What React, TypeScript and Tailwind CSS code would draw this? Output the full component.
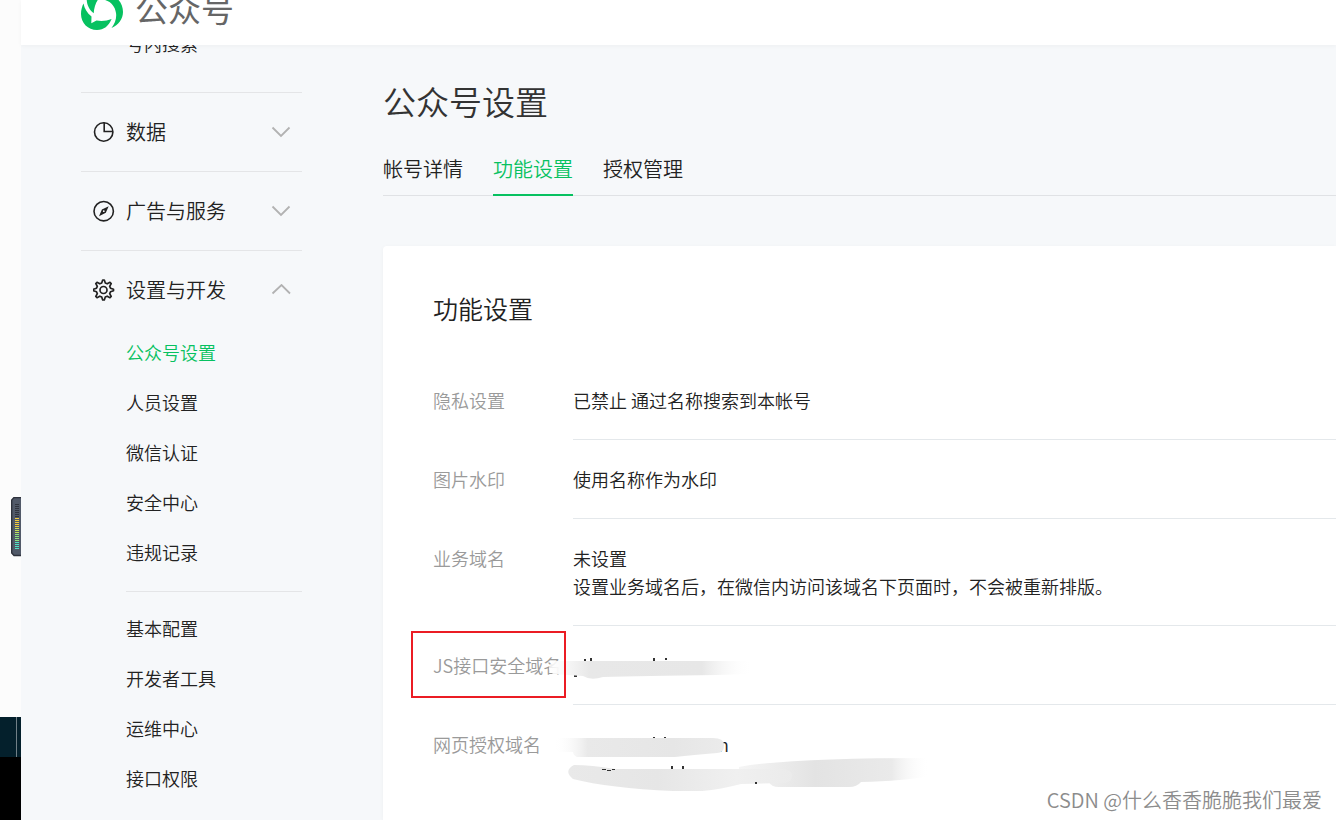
import { useState } from 'react';

const ACCOUNT_LINKS = ['公众号设置', '人员设置', '微信认证', '安全中心', '违规记录'];
const DEV_LINKS = ['基本配置', '开发者工具', '运维中心', '接口权限'];
const TABS = ['帐号详情', '功能设置', '授权管理'];

function Logo() {
  return (
    <svg viewBox="0 0 42 42" className="h-[42px] w-[42px] shrink-0" fill="#07c160" aria-hidden="true">
      <path d="M2.500 15.500C3.500 20.500 6 25 10.500 28.500L10.300 35.200L15.500 32.600C21 33.400 26 32.900 30.600 31C27.500 38 23 42 16 42C7 42 0 35 0 26C0 22 1 18.500 2.500 15.500Z" />
      <path d="M18 .3C22 .3 25 1 28 2.500C19 6.500 13.500 14 12.700 25.300C8.500 22 5.700 17 5.700 11C6 7 10 1 18 .3Z" />
      <path d="M29 6.500C37 9 42 16 42 24C42 31 37.500 37 30.500 40C34 35.500 35.800 30.500 35 25C34.200 19 30.500 13.500 23 11.700C24 9.500 26 7.500 29 6.500Z" />
    </svg>
  );
}

function PieIcon() {
  return (
    <svg viewBox="0 0 22 22" className="h-[22px] w-[22px]" fill="none" stroke="#222" strokeWidth="1.6" aria-hidden="true">
      <circle cx="10.700" cy="11" r="9.200" />
      <path d="M11.200 1.500V10.500H20" />
    </svg>
  );
}

function CompassIcon() {
  return (
    <svg viewBox="0 0 22 22" className="h-[22px] w-[22px]" fill="none" aria-hidden="true">
      <circle cx="10.700" cy="11.200" r="9.700" stroke="#222" strokeWidth="1.6" />
      <path fill="#222" fillRule="evenodd" d="M15.700 6.200L12.800 12.800L6 16.200L8.900 9.500ZM10.800 10.300A.9.9 0 1 0 10.800 12.100A.9.9 0 1 0 10.800 10.300Z" />
    </svg>
  );
}

function GearIcon() {
  return (
    <svg viewBox="0 0 22 22" className="h-[22px] w-[22px]" fill="none" stroke="#222" strokeWidth="1.7" strokeLinejoin="round" aria-hidden="true">
      <path d="M9.700 1H11.300L12.300 4L14.200 4.800L17 3.300L18.200 4.500L16.700 7.300L17.500 9.200L20.500 10.200V11.800L17.500 12.800L16.700 14.700L18.200 17.500L17 18.700L14.200 17.200L12.300 18L11.300 21H9.700L8.700 18L6.800 17.200L4 18.700L2.800 17.500L4.300 14.700L3.500 12.800L.5 11.800V10.200L3.500 9.200L4.300 7.300L2.800 4.500L4 3.300L6.800 4.800L8.700 4Z" />
      <circle cx="10.500" cy="11" r="3.500" />
    </svg>
  );
}

function Chevron({ up = false }: { up?: boolean }) {
  return (
    <svg viewBox="0 0 20 12" className="ml-auto h-3 w-5" fill="none" stroke="#b2b2b2" strokeWidth="1.8" aria-hidden="true">
      <path d={up ? 'M1.500 9.500L10.500 1L19 9.500' : 'M1.500 1.500L10 10L18.500 1.500'} />
    </svg>
  );
}

function SectionButton({ icon, label, open = false }: { icon: React.ReactNode; label: string; open?: boolean }) {
  return (
    <button type="button" aria-expanded={open} className="flex h-[78px] w-full items-center pr-[11px] pl-3 text-xl">
      {icon}
      <span className="ml-[11px]">{label}</span>
      <Chevron up={open} />
    </button>
  );
}

function NavList({ items, active }: { items: string[]; active?: string }) {
  return (
    <ul>
      {items.map((item) => (
        <li key={item}>
          <a href="#" className={`flex h-[50px] items-center ${item === active ? 'text-[#07c160]' : ''}`}>
            {item}
          </a>
        </li>
      ))}
    </ul>
  );
}

function DesktopStrip() {
  return (
    <div className="relative flex w-[21px] shrink-0 flex-col bg-[#fcfcfc]" aria-hidden="true">
      <div className="flex-1" />
      <div className="h-10 border-r-4 border-[#04202c] bg-[#04202c]">
        <div className="h-full border-r border-[#718087]" />
      </div>
      <div className="h-[63px] bg-black" />
      {/* level meter docked at the window edge */}
      <svg viewBox="0 0 10 60" className="absolute top-[497px] right-0 h-[60px] w-[10px]">
        <path d="M10 .5H3L.7 3V56L3 58.500H10" fill="#515968" stroke="#2e323c" strokeWidth="1.4" />
        <path d="M6 7V21" stroke="#30343e" strokeWidth="4" strokeDasharray="1 1" />
        <path d="M6 21V31" stroke="#f2cc3d" strokeWidth="4" strokeDasharray="1 1" />
        <path d="M6 31V37" stroke="#c5e05a" strokeWidth="4" strokeDasharray="1 1" />
        <path d="M6 37V45" stroke="#8fe37e" strokeWidth="4" strokeDasharray="1 1" />
        <path d="M6 45V53" stroke="#4fe3c4" strokeWidth="4" strokeDasharray="1 1" />
      </svg>
    </div>
  );
}

function Row({ label, last = false, children }: { label: string; last?: boolean; children: React.ReactNode }) {
  return (
    <div className="flex leading-7">
      <dt className="w-[140px] shrink-0 py-[25px] whitespace-nowrap text-[#9a9a9a]">{label}</dt>
      <dd className={`relative min-w-0 flex-1 py-[25px] ${last ? '' : 'border-b border-[#e4e8eb]'}`}>{children}</dd>
    </div>
  );
}

function JsSmudge() {
  return (
    <svg viewBox="0 0 220 40" className="absolute top-5 -left-8 h-10 w-[220px]" aria-hidden="true">
      <defs>
        <linearGradient id="js-smudge">
          <stop offset="0" stopColor="#fff" stopOpacity=".8" />
          <stop offset=".06" stopColor="#fafafa" />
          <stop offset=".2" stopColor="#e8e8e8" />
          <stop offset=".75" stopColor="#e7e7e7" />
          <stop offset="1" stopColor="#fff" stopOpacity="0" />
        </linearGradient>
      </defs>
      <path fill="#333" d="M43 13h2v3h-2zM49 12h2v4h-2zM112 12h2v4h-2zM124 12h2v2h-2zM33 29h3v2h-3z" />
      <path fill="url(#js-smudge)" d="M12 15H205Q212 15 212 22Q212 28 206 28L176 29Q100 30 62 31Q50 35 42 30L12 28Q4 22 12 15Z" />
    </svg>
  );
}

function OauthSmudge() {
  return (
    <svg viewBox="0 0 400 70" className="absolute top-4 -left-6 h-[70px] w-[400px]" aria-hidden="true">
      <defs>
        <linearGradient id="oauth-a">
          <stop offset="0" stopColor="#fff" stopOpacity="0" />
          <stop offset=".2" stopColor="#e9e9e9" />
          <stop offset=".7" stopColor="#e6e6e6" />
          <stop offset="1" stopColor="#ebebeb" />
        </linearGradient>
        <linearGradient id="oauth-b">
          <stop offset="0" stopColor="#e9e9e9" />
          <stop offset=".4" stopColor="#e6e6e6" />
          <stop offset=".75" stopColor="#f0f0f0" />
          <stop offset="1" stopColor="#ebebeb" />
        </linearGradient>
        <linearGradient id="oauth-c">
          <stop offset="0" stopColor="#f5f5f5" />
          <stop offset=".4" stopColor="#e3e3e3" />
          <stop offset=".8" stopColor="#eaeaea" />
          <stop offset="1" stopColor="#fff" stopOpacity="0" />
        </linearGradient>
      </defs>
      <path fill="url(#oauth-a)" d="M9 17H164Q175 17 175 24Q175 32 168 32Q144 34 126 36L28 36Q24 34 24 31H9Q0 24 9 17Z" />
      <path fill="url(#oauth-c)" d="M190 46Q240 37 381 37L381 55Q354 60 312 61Q308 66 300 66H230Q222 66 220 61L190 58Z" />
      <path fill="url(#oauth-b)" d="M25 44Q42 44 66 48L232 48Q243 48 243 55Q243 62 234 62L192 63Q154 73 124 70Q60 67 24 58Q14 50 25 44Z" />
      <path fill="#333" d="M104 16h2v1h-2zM115 16h2v1h-2zM53 48h4v1h-4zM58 49h4v1h-4zM63 48h3v1h-3zM122 45h2v3h-2zM133 45h2v3h-2zM206 61h2v2h-2z" />
    </svg>
  );
}

export default function App() {
  const [tab, setTab] = useState('功能设置');

  return (
    <div className="flex min-h-screen overflow-hidden bg-[#f6f8fa] font-['Noto_Sans_CJK_SC',sans-serif] text-[18px] font-[350] text-[#222]">
      <DesktopStrip />
      <div className="flex min-w-0 flex-1 flex-col">
        <header className="relative z-10 flex h-[45px] items-end overflow-hidden bg-white pb-[15px] pl-[60px] shadow-[0_1px_4px_rgba(0,0,0,0.04)]">
          <Logo />
          <span className="ml-3 text-[33px] leading-11 font-normal text-[#666]">公众号</span>
        </header>

        <div className="flex flex-1">
          <nav className="ml-[60px] w-[221px] shrink-0">
            <a href="#" className="-mt-[27px] mb-6 ml-[45px] flex h-[50px] items-center">号内搜索</a>
            <div className="border-t border-[#e4e5e7]">
              <SectionButton icon={<PieIcon />} label="数据" />
            </div>
            <div className="border-t border-[#e4e5e7]">
              <SectionButton icon={<CompassIcon />} label="广告与服务" />
            </div>
            <div className="border-t border-[#e4e5e7]">
              <SectionButton icon={<GearIcon />} label="设置与开发" open />
              <div className="-mt-0.5 ml-[45px]">
                <NavList items={ACCOUNT_LINKS} active="公众号设置" />
                <div className="mt-3.5 border-t border-[#e4e5e7] pt-[11px]">
                  <NavList items={DEV_LINKS} />
                </div>
              </div>
            </div>
          </nav>

          <main className="ml-[81px] flex min-w-0 flex-1 flex-col pt-[34px]">
            <h1 className="text-[33px] leading-11 text-[#333]">公众号设置</h1>
            <div role="tablist" className="mt-5 mb-[50px] flex h-[53px] gap-[30px] border-b border-[#e0e2e5] text-xl">
              {TABS.map((name) => (
                <button
                  key={name}
                  type="button"
                  role="tab"
                  aria-selected={tab === name}
                  onClick={() => setTab(name)}
                  className={`-mb-px border-b-2 ${tab === name ? 'border-[#07c160] text-[#07c160]' : 'border-transparent'}`}
                >
                  {name}
                </button>
              ))}
            </div>

            <section className="relative flex-1 rounded-tl bg-white pt-10 pl-[50px] shadow-[0_1px_4px_rgba(0,0,0,0.04)]">
              <h2 className="text-[25px] leading-11">功能设置</h2>
              <dl className="mt-[31px]">
                <Row label="隐私设置">已禁止 通过名称搜索到本帐号</Row>
                <Row label="图片水印">使用名称作为水印</Row>
                <Row label="业务域名">
                  <p>未设置</p>
                  <p>设置业务域名后，在微信内访问该域名下页面时，不会被重新排版。</p>
                </Row>
                <div className="relative">
                  <Row label="JS接口安全域名">
                    <p className="h-7" />
                    <JsSmudge />
                  </Row>
                  <div className="absolute top-[5px] -left-[22px] h-[67px] w-[155px] border-2 border-[#eb1c24]" />
                </div>
                <Row label="网页授权域名" last>
                  <p className="pl-[145px]">n</p>
                  <OauthSmudge />
                </Row>
              </dl>
              <p className="absolute right-[14px] bottom-1.5 text-xl text-[#8c8c8c]">CSDN @什么香香脆脆我们最爱</p>
            </section>
          </main>
        </div>
      </div>
    </div>
  );
}
